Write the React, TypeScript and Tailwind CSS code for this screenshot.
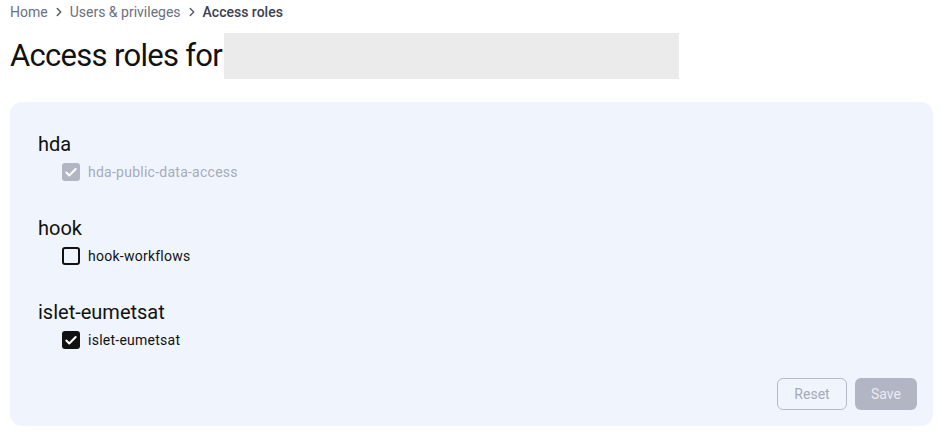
import React, { useState } from "react";
import { ChevronRight, Check } from "lucide-react";

type Role = { id: string; label: string; checked: boolean; disabled?: boolean };
type Group = { name: string; roles: Role[] };

const groups: Group[] = [
  { name: "hda", roles: [{ id: "hda-public-data-access", label: "hda-public-data-access", checked: true, disabled: true }] },
  { name: "hook", roles: [{ id: "hook-workflows", label: "hook-workflows", checked: false }] },
  { name: "islet-eumetsat", roles: [{ id: "islet-eumetsat", label: "islet-eumetsat", checked: true }] },
];

function RoleCheckbox({ role, onToggle }: { role: Role; onToggle: () => void }) {
  const box = role.disabled
    ? "bg-[#b1b5c4] border-[#b1b5c4]"
    : role.checked
      ? "bg-[#111111] border-[#111111]"
      : "bg-transparent border-[#111111]";
  return (
    <label
      className={`flex items-center gap-2 h-6 ml-6 text-sm tracking-[0.25px] ${role.disabled ? "text-[#a7abba] cursor-default" : "text-[#111111] cursor-pointer"}`}
    >
      <button
        type="button"
        disabled={role.disabled}
        onClick={onToggle}
        className={`flex items-center justify-center w-[18px] h-[18px] rounded-[3px] border-2 ${box}`}
      >
        {role.checked && <Check size={15} strokeWidth={3.5} className="text-white" />}
      </button>
      {role.label}
    </label>
  );
}

export default function App() {
  const [state, setState] = useState(groups);

  const toggle = (gi: number, ri: number) => {
    setState((prev) =>
      prev.map((g, i) =>
        i !== gi ? g : { ...g, roles: g.roles.map((r, j) => (j !== ri ? r : { ...r, checked: !r.checked })) }
      )
    );
  };

  return (
    <div className="min-h-screen bg-white pl-[10px] pr-[13px] pt-[2px] font-['Roboto',sans-serif] text-[#111111]">
      <nav className="flex items-center h-5 text-sm text-[#6b7080]">
        <span>Home</span>
        <ChevronRight size={14} strokeWidth={2.5} className="mx-[4px] text-[#55596a]" />
        <span>Users &amp; privileges</span>
        <ChevronRight size={14} strokeWidth={2.5} className="mx-[4px] text-[#55596a]" />
        <span className="text-[#3c4152] font-medium">Access roles</span>
      </nav>

      <div className="flex items-center mt-[11px] h-[46px]">
        <h1 className="text-[31px] leading-[46px] tracking-[-0.7px] text-[#111111]">Access roles for</h1>
        <div className="ml-[2px] w-[455px] h-[46px] bg-[#ebebeb]" />
      </div>

      <section className="mt-[23px] h-[324px] rounded-xl bg-[#f0f5fd] pl-[28px] pr-4 pt-[28px] pb-4 flex flex-col">
        <div className="flex flex-col gap-[30px]">
          {state.map((g, gi) => (
            <div key={g.name} className="flex flex-col">
              <h2 className="text-xl leading-7">{g.name}</h2>
              <div className="mt-[2px] flex flex-col">
                {g.roles.map((r, ri) => (
                  <RoleCheckbox key={r.id} role={r} onToggle={() => toggle(gi, ri)} />
                ))}
              </div>
            </div>
          ))}
        </div>
        <div className="mt-auto flex justify-end gap-2">
          <button
            type="button"
            disabled
            className="h-8 w-[70px] rounded-md border border-[#b6bac8] text-sm text-[#a5aaba] bg-transparent"
          >
            Reset
          </button>
          <button
            type="button"
            disabled
            className="h-8 w-[62px] rounded-md bg-[#b1b5c4] text-sm text-[#e9ebf1]"
          >
            Save
          </button>
        </div>
      </section>
    </div>
  );
}
